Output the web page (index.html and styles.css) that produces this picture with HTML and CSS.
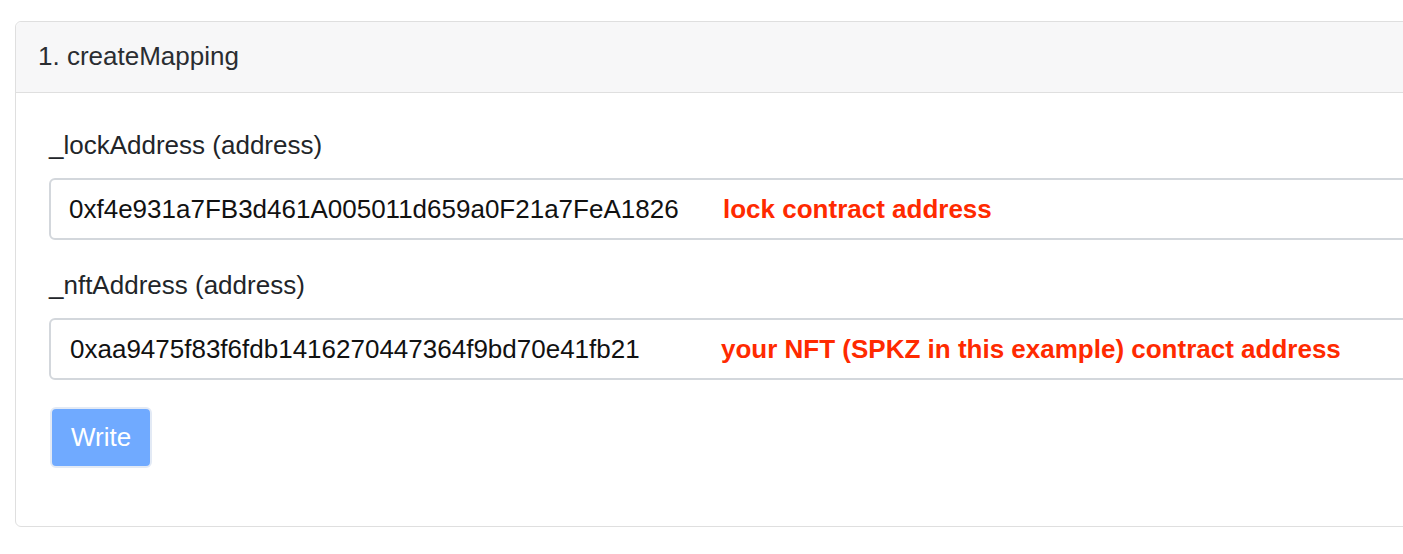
FILE: index.html
```html
<!DOCTYPE html>
<html>
<head>
<meta charset="utf-8">
<link rel="stylesheet" href="styles.css">
</head>
<body>
<div class="card">
  <div class="card-header">1. createMapping</div>
  <div class="card-body">
    <div class="form-group">
      <label class="label">_lockAddress (address)</label>
      <div class="field">
        <input class="form-control" type="text" value="0xf4e931a7FB3d461A005011d659a0F21a7FeA1826">
        <span class="note note-1">lock contract address</span>
      </div>
    </div>
    <div class="form-group form-group-2">
      <label class="label">_nftAddress (address)</label>
      <div class="field">
        <input class="form-control form-control-2" type="text" value="0xaa9475f83f6fdb1416270447364f9bd70e41fb21">
        <span class="note note-2">your NFT (SPKZ in this example) contract address</span>
      </div>
    </div>
    <div class="form-group">
      <button class="btn">Write</button>
    </div>
  </div>
</div>
</body>
</html>
```

FILE: styles.css
```css
html, body {
  margin: 0;
  padding: 0;
  background: #ffffff;
  overflow: hidden;
}

body {
  font-family: "Liberation Sans", Arial, sans-serif;
  color: #212529;
  padding: 21px 0 0 15px;
}

.card {
  width: 1440px;
  border: 1px solid #dfdfdf;
  border-radius: 6px;
  background: #ffffff;
}

.card-header {
  background: #f7f7f8;
  border-bottom: 1px solid #dfdfdf;
  border-radius: 6px 6px 0 0;
  font-size: 26px;
  line-height: 39px;
  padding: 15px 22px 16px;
  color: #2a2d31;
}

.card-body {
  padding: 33px 33px 32px 33px;
}

.form-group {
  margin-bottom: 26px;
}

.form-group-2 {
  margin-bottom: 27px;
}

.form-group:last-child {
  margin-bottom: 26px;
}

.label {
  display: block;
  font-size: 26px;
  line-height: 39px;
  margin-bottom: 13px;
  color: #222529;
}

.field {
  position: relative;
}

.form-control {
  display: block;
  box-sizing: border-box;
  width: 100%;
  height: 62px;
  margin: 0;
  padding: 0 18px;
  font-family: "Liberation Sans", Arial, sans-serif;
  font-size: 26px;
  color: #111111;
  background: #ffffff;
  border: 2px solid #d3d7dc;
  border-radius: 6px;
  outline: none;
}

.form-control-2 {
  padding-left: 19px;
}

.note {
  position: absolute;
  top: 0;
  bottom: 0;
  display: flex;
  align-items: center;
  font-size: 26px;
  font-weight: bold;
  color: #ff2a00;
  white-space: nowrap;
}

.note-1 {
  left: 674px;
}

.note-2 {
  left: 672px;
}

.btn {
  display: inline-block;
  box-sizing: border-box;
  height: 61px;
  padding: 0 19px;
  margin-left: 1px;
  font-family: "Liberation Sans", Arial, sans-serif;
  font-size: 26px;
  color: #ffffff;
  background: #70aaff;
  border: 2px solid #e3eaf5;
  border-radius: 6px;
  vertical-align: top;
}
```
